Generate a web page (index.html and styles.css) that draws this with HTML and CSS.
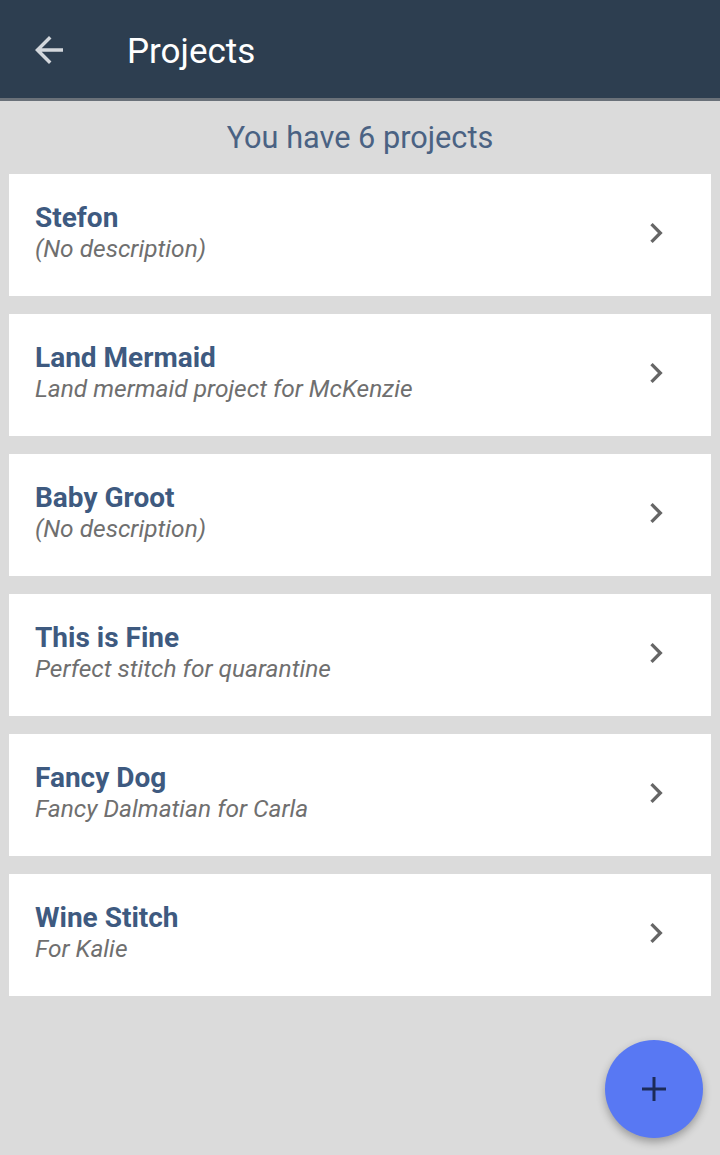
FILE: index.html
```html
<!DOCTYPE html>
<html lang="en">
<head>
    <meta charset="UTF-8">
    <meta name="viewport" content="width=device-width, initial-scale=1.0">
    <title>Projects</title>
    <link rel="stylesheet" href="styles.css">
</head>
<body>
    <header class="app-bar">
        <button class="back-btn" aria-label="Back">
            <svg viewBox="0 0 24 24" width="42" height="42"><path d="M20 11H7.83l5.59-5.59L12 4l-8 8 8 8 1.41-1.41L7.83 13H20v-2z"/></svg>
        </button>
        <h1>Projects</h1>
    </header>

    <main class="content">
        <h2 class="count">You have 6 projects</h2>

        <ul class="project-list">
            <li class="project">
                <div class="info">
                    <div class="name">Stefon</div>
                    <div class="desc">(No description)</div>
                </div>
                <svg class="chevron" viewBox="0 0 24 24" width="40" height="40"><path d="M10 6L8.59 7.41 13.17 12l-4.58 4.59L10 18l6-6z"/></svg>
            </li>
            <li class="project">
                <div class="info">
                    <div class="name">Land Mermaid</div>
                    <div class="desc">Land mermaid project for McKenzie</div>
                </div>
                <svg class="chevron" viewBox="0 0 24 24" width="40" height="40"><path d="M10 6L8.59 7.41 13.17 12l-4.58 4.59L10 18l6-6z"/></svg>
            </li>
            <li class="project">
                <div class="info">
                    <div class="name">Baby Groot</div>
                    <div class="desc">(No description)</div>
                </div>
                <svg class="chevron" viewBox="0 0 24 24" width="40" height="40"><path d="M10 6L8.59 7.41 13.17 12l-4.58 4.59L10 18l6-6z"/></svg>
            </li>
            <li class="project">
                <div class="info">
                    <div class="name">This is Fine</div>
                    <div class="desc">Perfect stitch for quarantine</div>
                </div>
                <svg class="chevron" viewBox="0 0 24 24" width="40" height="40"><path d="M10 6L8.59 7.41 13.17 12l-4.58 4.59L10 18l6-6z"/></svg>
            </li>
            <li class="project">
                <div class="info">
                    <div class="name">Fancy Dog</div>
                    <div class="desc">Fancy Dalmatian for Carla</div>
                </div>
                <svg class="chevron" viewBox="0 0 24 24" width="40" height="40"><path d="M10 6L8.59 7.41 13.17 12l-4.58 4.59L10 18l6-6z"/></svg>
            </li>
            <li class="project">
                <div class="info">
                    <div class="name">Wine Stitch</div>
                    <div class="desc">For Kalie</div>
                </div>
                <svg class="chevron" viewBox="0 0 24 24" width="40" height="40"><path d="M10 6L8.59 7.41 13.17 12l-4.58 4.59L10 18l6-6z"/></svg>
            </li>
        </ul>
    </main>

    <button class="fab" aria-label="New project">
        <svg viewBox="0 0 24 24" width="24" height="24"><path d="M10.5 0h3v10.5H24v3H13.5V24h-3V13.5H0v-3h10.5z"/></svg>
    </button>
</body>
</html>
```

FILE: styles.css
```css
body {
    font-family: Roboto, 'Liberation Sans', sans-serif;
    margin: 0;
    background: #dbdbdb;
    min-height: 100vh;
}
.app-bar {
    height: 98px;
    background: #2d3e50;
    display: flex;
    align-items: center;
    box-shadow: 0 3px 0 #6a7179;
    position: relative;
}
.back-btn {
    background: none;
    border: none;
    padding: 0;
    margin: 2px 0 0 28px;
    width: 42px;
    height: 42px;
    fill: #d3d7dc;
    cursor: pointer;
}
.app-bar h1 {
    margin: 4px 0 0 57px;
    color: #fff;
    font-size: 35px;
    font-weight: 400;
}
.content {
    padding: 3px 9px 0;
}
.count {
    margin: 0;
    height: 73px;
    line-height: 74px;
    text-align: center;
    font-size: 30.7px;
    font-weight: 400;
    color: #4a6283;
}
.project-list {
    list-style: none;
    margin: 0;
    padding: 0;
    display: flex;
    flex-direction: column;
    gap: 18px;
}
.project {
    background: #fff;
    height: 122px;
    box-sizing: border-box;
    padding: 28px 35px 32px 26px;
    display: flex;
    align-items: center;
    justify-content: space-between;
}
.info {
    display: flex;
    flex-direction: column;
}
.name {
    font-size: 28px;
    line-height: 32px;
    font-weight: 700;
    color: #3e5a80;
}
.desc {
    font-size: 24.5px;
    line-height: 30px;
    font-style: italic;
    color: #6f6f6f;
}
.chevron {
    fill: #666;
}
.fab {
    position: fixed;
    left: 605px;
    top: 1040px;
    width: 98px;
    height: 98px;
    border-radius: 50%;
    border: none;
    background: #5878f3;
    fill: #1c2b58;
    display: flex;
    align-items: center;
    justify-content: center;
    box-shadow: 0 4px 8px rgba(0, 0, 0, 0.3);
    cursor: pointer;
}
```
